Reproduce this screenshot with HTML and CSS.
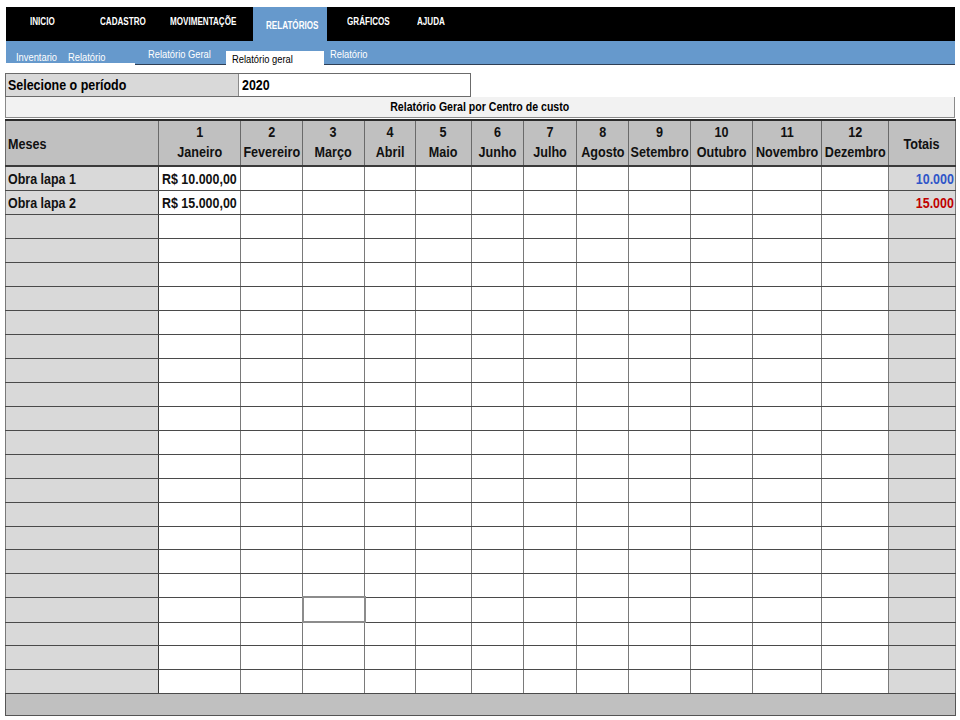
FILE: index.html
```html
<!DOCTYPE html>
<html lang="pt-BR">
<head>
<meta charset="utf-8">
<title>Relatório Geral</title>
<link rel="stylesheet" href="styles.css">
</head>
<body>
<div class="page">
  <nav class="topnav">
    <span class="nav-item first"><span class="sx">INICIO</span></span>
    <span class="nav-item"><span class="sx">CADASTRO</span></span>
    <span class="nav-item"><span class="sx">MOVIMENTAÇÕE</span></span>
    <span class="nav-item active"><span class="sx">RELATÓRIOS</span></span>
    <span class="nav-item gfx"><span class="sx">GRÁFICOS</span></span>
    <span class="nav-item"><span class="sx">AJUDA</span></span>
  </nav>
  <div class="subbar">
    <span class="sub s1"><span class="sx">Inventario</span></span>
    <span class="sub s2"><span class="sx">Relatório</span></span>
    <span class="sub s3"><span class="sx">Relatório Geral</span></span>
    <span class="sub s4"><span class="sx">Relatório geral</span></span>
    <span class="sub s5"><span class="sx">Relatório</span></span>
  </div>

  <div class="period">
    <div class="period-label"><span class="sx">Selecione o período</span></div>
    <div class="period-value"><span class="sx">2020</span></div>
  </div>

  <div class="title-bar"><span class="sx">Relatório Geral por Centro de custo</span></div>

  <table class="grid">
    <colgroup>
      <col style="width:153px"><col style="width:82px"><col style="width:62px"><col style="width:62px"><col style="width:51px"><col style="width:56px"><col style="width:52px"><col style="width:53px"><col style="width:52px"><col style="width:62px"><col style="width:62px"><col style="width:69px"><col style="width:67px"><col style="width:67px">
    </colgroup>
    <thead>
      <tr>
        <th class="meses"><div class="hc"><span class="sx">Meses</span></div></th>
        <th><div class="hc"><span class="sx">1<br>Janeiro</span></div></th>
        <th><div class="hc"><span class="sx">2<br>Fevereiro</span></div></th>
        <th><div class="hc"><span class="sx">3<br>Março</span></div></th>
        <th><div class="hc"><span class="sx">4<br>Abril</span></div></th>
        <th><div class="hc"><span class="sx">5<br>Maio</span></div></th>
        <th><div class="hc"><span class="sx">6<br>Junho</span></div></th>
        <th><div class="hc"><span class="sx">7<br>Julho</span></div></th>
        <th><div class="hc"><span class="sx">8<br>Agosto</span></div></th>
        <th><div class="hc"><span class="sx">9<br>Setembro</span></div></th>
        <th><div class="hc"><span class="sx">10<br>Outubro</span></div></th>
        <th><div class="hc"><span class="sx">11<br>Novembro</span></div></th>
        <th><div class="hc"><span class="sx">12<br>Dezembro</span></div></th>
        <th class="tot-h"><div class="hc"><span class="sx">Totais</span></div></th>
      </tr>
    </thead>
    <tbody>
      <tr><td class="name"><span class="sx">Obra lapa 1</span></td><td class="val"><span class="sx">R$ 10.000,00</span></td><td></td><td></td><td></td><td></td><td></td><td></td><td></td><td></td><td></td><td></td><td></td><td class="tot blue"><span class="sx">10.000</span></td></tr>
      <tr><td class="name"><span class="sx">Obra lapa 2</span></td><td class="val"><span class="sx">R$ 15.000,00</span></td><td></td><td></td><td></td><td></td><td></td><td></td><td></td><td></td><td></td><td></td><td></td><td class="tot red"><span class="sx">15.000</span></td></tr>
      <tr><td class="name"></td><td></td><td></td><td></td><td></td><td></td><td></td><td></td><td></td><td></td><td></td><td></td><td></td><td class="tot"></td></tr>
      <tr><td class="name"></td><td></td><td></td><td></td><td></td><td></td><td></td><td></td><td></td><td></td><td></td><td></td><td></td><td class="tot"></td></tr>
      <tr><td class="name"></td><td></td><td></td><td></td><td></td><td></td><td></td><td></td><td></td><td></td><td></td><td></td><td></td><td class="tot"></td></tr>
      <tr><td class="name"></td><td></td><td></td><td></td><td></td><td></td><td></td><td></td><td></td><td></td><td></td><td></td><td></td><td class="tot"></td></tr>
      <tr><td class="name"></td><td></td><td></td><td></td><td></td><td></td><td></td><td></td><td></td><td></td><td></td><td></td><td></td><td class="tot"></td></tr>
      <tr><td class="name"></td><td></td><td></td><td></td><td></td><td></td><td></td><td></td><td></td><td></td><td></td><td></td><td></td><td class="tot"></td></tr>
      <tr><td class="name"></td><td></td><td></td><td></td><td></td><td></td><td></td><td></td><td></td><td></td><td></td><td></td><td></td><td class="tot"></td></tr>
      <tr><td class="name"></td><td></td><td></td><td></td><td></td><td></td><td></td><td></td><td></td><td></td><td></td><td></td><td></td><td class="tot"></td></tr>
      <tr><td class="name"></td><td></td><td></td><td></td><td></td><td></td><td></td><td></td><td></td><td></td><td></td><td></td><td></td><td class="tot"></td></tr>
      <tr><td class="name"></td><td></td><td></td><td></td><td></td><td></td><td></td><td></td><td></td><td></td><td></td><td></td><td></td><td class="tot"></td></tr>
      <tr><td class="name"></td><td></td><td></td><td></td><td></td><td></td><td></td><td></td><td></td><td></td><td></td><td></td><td></td><td class="tot"></td></tr>
      <tr><td class="name"></td><td></td><td></td><td></td><td></td><td></td><td></td><td></td><td></td><td></td><td></td><td></td><td></td><td class="tot"></td></tr>
      <tr><td class="name"></td><td></td><td></td><td></td><td></td><td></td><td></td><td></td><td></td><td></td><td></td><td></td><td></td><td class="tot"></td></tr>
      <tr class="short"><td class="name"></td><td></td><td></td><td></td><td></td><td></td><td></td><td></td><td></td><td></td><td></td><td></td><td></td><td class="tot"></td></tr>
      <tr><td class="name"></td><td></td><td></td><td></td><td></td><td></td><td></td><td></td><td></td><td></td><td></td><td></td><td></td><td class="tot"></td></tr>
      <tr class="short"><td class="name"></td><td></td><td></td><td></td><td></td><td></td><td></td><td></td><td></td><td></td><td></td><td></td><td></td><td class="tot"></td></tr>
      <tr><td class="name"></td><td></td><td></td><td class="selected"></td><td></td><td></td><td></td><td></td><td></td><td></td><td></td><td></td><td></td><td class="tot"></td></tr>
      <tr class="short"><td class="name"></td><td></td><td></td><td></td><td></td><td></td><td></td><td></td><td></td><td></td><td></td><td></td><td></td><td class="tot"></td></tr>
      <tr><td class="name"></td><td></td><td></td><td></td><td></td><td></td><td></td><td></td><td></td><td></td><td></td><td></td><td></td><td class="tot"></td></tr>
      <tr><td class="name"></td><td></td><td></td><td></td><td></td><td></td><td></td><td></td><td></td><td></td><td></td><td></td><td></td><td class="tot"></td></tr>
    </tbody>
    <tfoot>
      <tr><td class="footer" colspan="14"></td></tr>
    </tfoot>
  </table>
</div>
</body>
</html>
```

FILE: styles.css
```css
html, body {
  margin: 0;
  padding: 0;
  background: #ffffff;
}

.page {
  width: 950px;
  padding: 7px 5px 0 5px;
  font-family: "Liberation Sans", Arial, sans-serif;
}

/* horizontally condensed text (Arial Narrow / Calibri look) */
.sx {
  display: inline-block;
  white-space: nowrap;
  transform-origin: left center;
  transform: scaleX(0.83);
}

/* top navigation */
.topnav {
  display: grid;
  grid-template-columns: 94px 70px 83px 74px 90px auto;
  margin-left: 1px;
  height: 34px;
  background: #000000;
  font-weight: bold;
  font-size: 10.5px;
  color: #ffffff;
}

.nav-item {
  padding-top: 8px;
  white-space: nowrap;
  line-height: 12px;
}

.nav-item .sx {
  transform: scaleX(0.77);
}

.nav-item.first {
  padding-left: 24px;
}

.nav-item.active {
  background: #6699cc;
  padding-top: 12px;
  padding-left: 13px;
}

.nav-item.gfx {
  padding-left: 20px;
}

/* sub tabs bar */
.subbar {
  display: flex;
  align-items: flex-end;
  margin-left: 1px;
  height: 23px;
  background: #6699cc;
  border-bottom: 1px solid #2f3f55;
  font-size: 11px;
  color: #ffffff;
}

.sub {
  box-sizing: border-box;
  white-space: nowrap;
  line-height: 12px;
}

.sub .sx {
  transform: scaleX(0.85);
}

.s1 {
  width: 62px;
  padding-left: 10px;
  margin-bottom: -1px;
  border-bottom: 2px solid #ffffff;
}

.s2 {
  width: 67px;
  margin-bottom: -1px;
  border-bottom: 2px solid #ffffff;
}

.s3 {
  width: 91px;
  padding-left: 13px;
  padding-bottom: 4px;
}

.s4 {
  width: 98px;
  height: 14px;
  padding-left: 6px;
  margin-bottom: -1px;
  background: #ffffff;
  color: #000000;
  line-height: 16px;
}

.s5 {
  padding-left: 6px;
  padding-bottom: 4px;
}

/* period selector */
.period {
  display: flex;
  width: 464px;
  height: 22px;
  margin-top: 8px;
  border: 1px solid #6b6b6b;
  font-weight: bold;
  font-size: 15px;
  line-height: 22px;
}

.period-label {
  width: 230px;
  padding-left: 2px;
  background: #d9d9d9;
  border-right: 1px solid #8a8a8a;
}

.period-value {
  padding-left: 3px;
  background: #ffffff;
}

/* title bar */
.title-bar {
  height: 20px;
  border: 1px solid #8a8a8a;
  border-top: 0;
  background: #f2f2f2;
  text-align: center;
  font-weight: bold;
  font-size: 12px;
  line-height: 21px;
  color: #000000;
  margin-bottom: 1px;
}

.title-bar .sx {
  transform-origin: center center;
  transform: scaleX(0.88);
}

/* main grid */
.grid {
  width: 950px;
  border-collapse: collapse;
  table-layout: fixed;
  font-weight: bold;
  font-size: 15px;
}

.grid th {
  height: 41px;
  padding: 0 0 3px 0;
  background: #c0c0c0;
  border-top: 2px solid #2b2b2b;
  border-bottom: 2px solid #3a3a3a;
  border-left: 1px solid #6a6a6a;
  border-right: 1px solid #6a6a6a;
  font-weight: bold;
  line-height: 20px;
  color: #111111;
  white-space: nowrap;
}

.hc {
  display: flex;
  justify-content: center;
  text-align: center;
}

.hc .sx {
  transform-origin: center center;
  transform: scaleX(0.84);
}

.grid th.meses .hc {
  justify-content: flex-start;
  text-align: left;
  padding-left: 2px;
}

.grid th.meses .sx {
  transform-origin: left center;
}

.grid th.meses,
.grid th.tot-h {
  padding-bottom: 1px;
  padding-top: 2px;
}

.grid td {
  height: 23px;
  padding: 0;
  border-top: 1px solid #4a4a4a;
  border-bottom: 1px solid #4a4a4a;
  border-left: 1px solid #7a7a7a;
  border-right: 1px solid #7a7a7a;
  background: #ffffff;
  white-space: nowrap;
  overflow: hidden;
  color: #111111;
  line-height: 20px;
}

.grid tr.short td {
  height: 22px;
}

.grid td.name {
  background: #d9d9d9;
  padding-left: 2px;
  border-right: 1px solid #3a3a3a;
}

.grid td.val {
  padding-left: 3px;
}

.grid td.tot {
  background: #d9d9d9;
  text-align: right;
  padding-right: 1px;
  border-left: 1px solid #3a3a3a;
}

.grid td.tot .sx {
  transform-origin: right center;
}

.grid td.blue {
  color: #2f55c8;
}

.grid td.red {
  color: #c00000;
}

.grid td.selected {
  border: 2px solid #8c8c8c;
}

.grid td.footer {
  height: 21px;
  background: #c0c0c0;
  border: 1px solid #555555;
  border-top: 1px solid #a0a0a0;
}
```
